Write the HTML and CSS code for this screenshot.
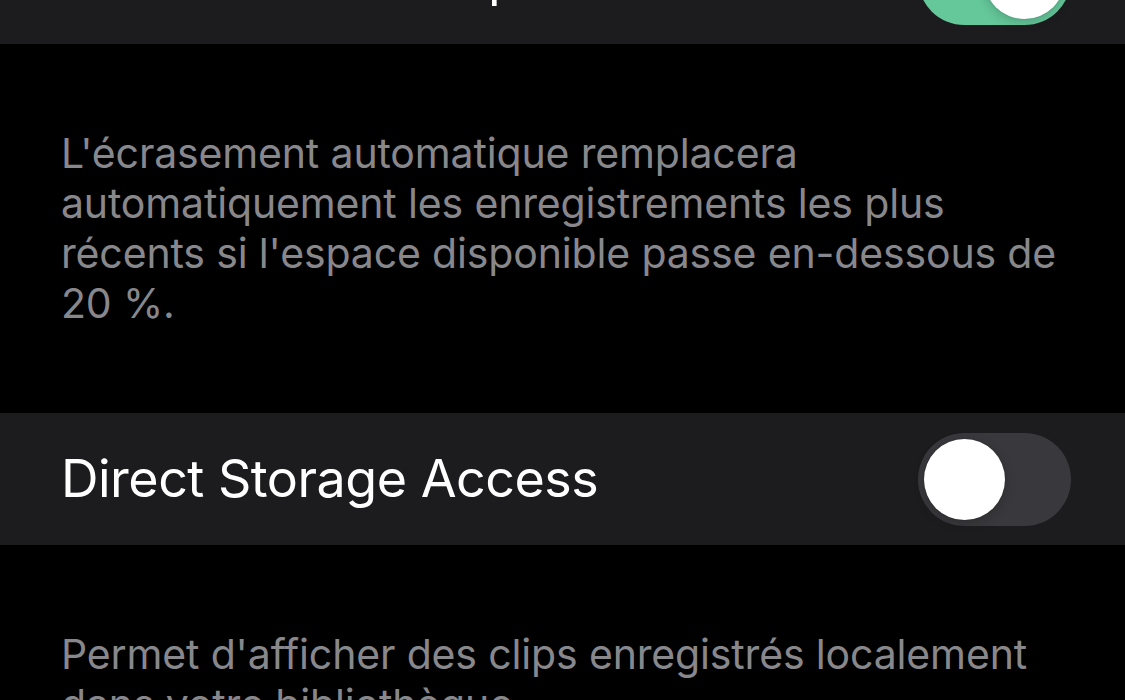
FILE: index.html
```html
<!DOCTYPE html>
<html lang="fr">
<head>
    <meta charset="UTF-8">
    <meta name="viewport" content="width=device-width, initial-scale=1.0">
    <title>Réglages</title>
    <link rel="stylesheet" href="styles.css">
</head>
<body>
    <div class="settings">
        <div class="row row-top">
            <span class="row-label">Automatic Cleanup</span>
            <span class="switch on"><span class="knob"></span></span>
        </div>
        <p class="footer">L'écrasement automatique remplacera automatiquement les enregistrements les plus récents si l'espace disponible passe en-dessous de 20&nbsp;%.</p>

        <div class="row">
            <span class="row-label">Direct Storage Access</span>
            <span class="switch"><span class="knob"></span></span>
        </div>
        <p class="footer">Permet d'afficher des clips enregistrés localement dans votre bibliothèque.</p>
    </div>
</body>
</html>
```

FILE: styles.css
```css
/* reset */
* {
    margin: 0;
    padding: 0;
    box-sizing: border-box;
}

body {
    font-family: Inter, "Noto Sans", sans-serif;
    background: #000;
    color: #fff;
    height: 100vh;
    overflow: hidden;
}

/* settings list */
.settings {
    display: flex;
    flex-direction: column;
}

.row {
    height: 132px;
    flex-shrink: 0;
    display: flex;
    align-items: center;
    justify-content: space-between;
    padding: 0 54px 0 61px;
    background: #1c1c1e;
}

.row-top {
    margin-top: -88px;
}

.row-label {
    font-size: 52px;
    line-height: 62px;
    letter-spacing: -0.5px;
    color: #fff;
}

/* footer text under a row */
.footer {
    padding: 84px 60px 85px 61px;
    font-size: 41px;
    line-height: 50px;
    letter-spacing: -0.15px;
    color: #88888c;
}

/* toggle */
.switch {
    width: 153px;
    height: 93px;
    border-radius: 47px;
    background: #39393d;
    position: relative;
    flex-shrink: 0;
}

.switch .knob {
    position: absolute;
    top: 6px;
    left: 6px;
    width: 81px;
    height: 81px;
    border-radius: 50%;
    background: #fff;
    box-shadow: 0 3px 12px rgba(0, 0, 0, 0.2), 0 0 2px rgba(0, 0, 0, 0.15);
}

.switch.on {
    background: #65c89b;
}

.switch.on .knob {
    left: auto;
    right: 6px;
}
```
